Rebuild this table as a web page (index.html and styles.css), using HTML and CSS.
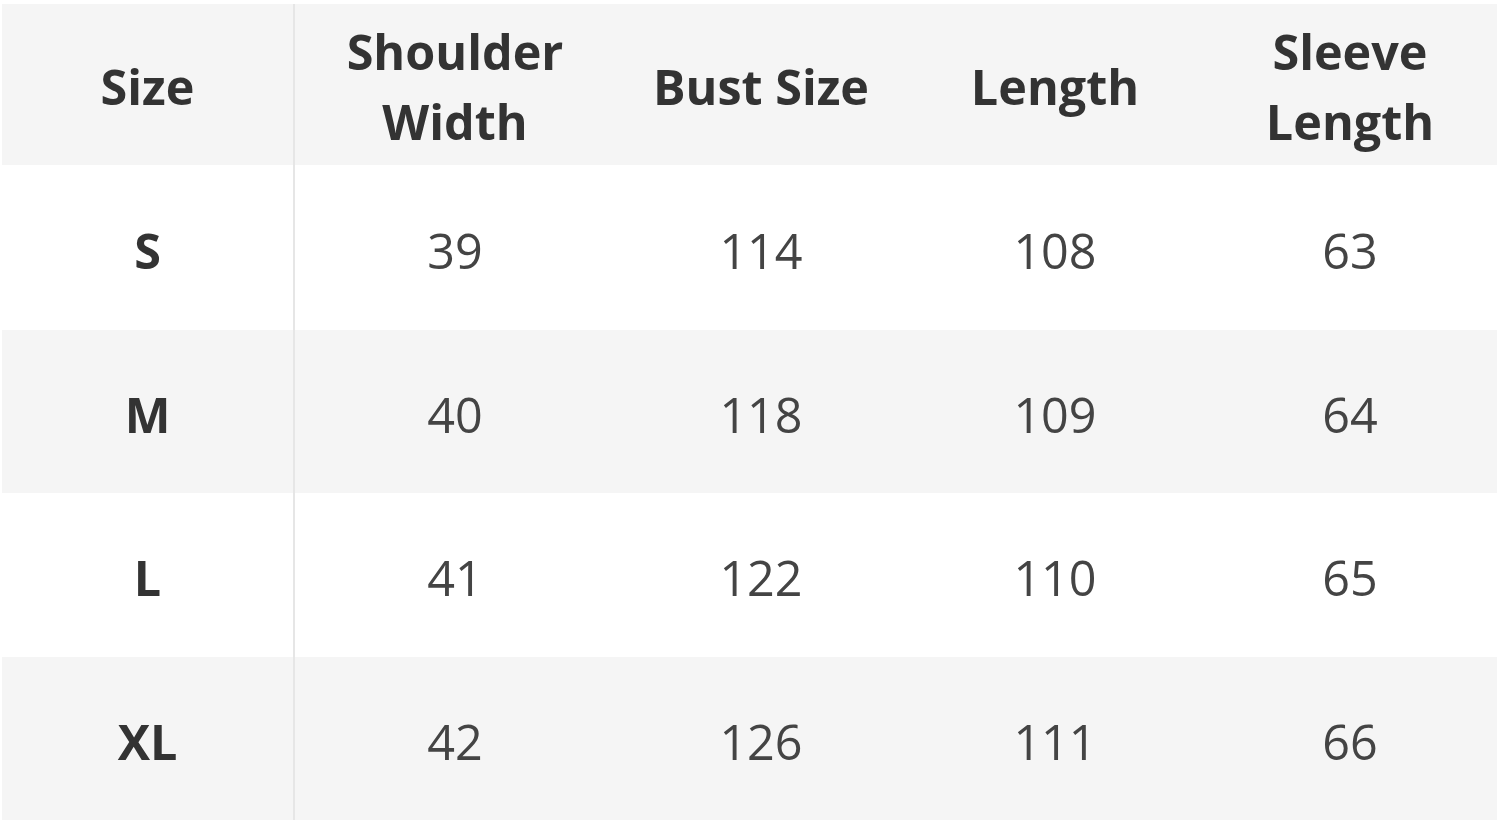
FILE: index.html
```html
<!DOCTYPE html>
<html>
<head>
<meta charset="utf-8">
<link rel="stylesheet" href="styles.css">
</head>
<body>
<div class="chart">
  <div class="row head">
    <div class="cell first">Size</div>
    <div class="cell">Shoulder<br>Width</div>
    <div class="cell">Bust Size</div>
    <div class="cell">Length</div>
    <div class="cell">Sleeve<br>Length</div>
  </div>
  <div class="row r1">
    <div class="cell first">S</div>
    <div class="cell">39</div>
    <div class="cell">114</div>
    <div class="cell">108</div>
    <div class="cell">63</div>
  </div>
  <div class="row alt">
    <div class="cell first">M</div>
    <div class="cell">40</div>
    <div class="cell">118</div>
    <div class="cell">109</div>
    <div class="cell">64</div>
  </div>
  <div class="row r3">
    <div class="cell first">L</div>
    <div class="cell">41</div>
    <div class="cell">122</div>
    <div class="cell">110</div>
    <div class="cell">65</div>
  </div>
  <div class="row alt">
    <div class="cell first">XL</div>
    <div class="cell">42</div>
    <div class="cell">126</div>
    <div class="cell">111</div>
    <div class="cell">66</div>
  </div>
</div>
</body>
</html>
```

FILE: styles.css
```css
html, body {
  margin: 0;
  padding: 0;
  background: #ffffff;
}
body {
  padding: 4px 3px 4px 2px;
  font-family: "Open Sans", "Noto Sans", sans-serif;
}
.chart {
  display: flex;
  flex-direction: column;
  width: 1495px;
}
.row {
  display: grid;
  grid-template-columns: 293px 320px 292px 296px 294px;
  height: 163px;
  background: #ffffff;
}
.row.head {
  height: 161px;
  background: #f5f5f5;
}
.row.r1 {
  height: 165px;
}
.row.r3 {
  height: 164px;
}
.row.alt {
  background: #f5f5f5;
}
.cell {
  display: flex;
  align-items: center;
  justify-content: center;
  text-align: center;
  font-size: 48.5px;
  line-height: 70px;
  color: #444444;
  font-weight: 400;
  padding-top: 4px;
}
.cell.first {
  box-sizing: border-box;
  border-right: 2px solid #e6e6e6;
  font-weight: 700;
  color: #333333;
}
.head .cell {
  font-weight: 700;
  color: #333333;
  padding-top: 2px;
}
```
